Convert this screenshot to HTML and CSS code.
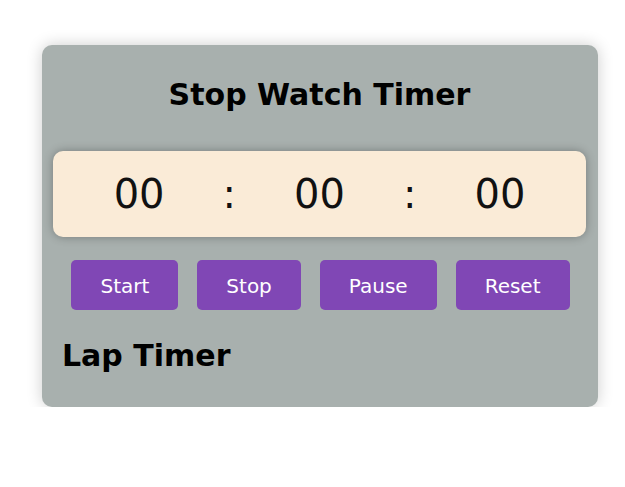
FILE: index.html
```html
<!DOCTYPE html>
<html lang="en">
<head>
<meta charset="utf-8">
<title>Stop Watch Timer</title>
<link rel="stylesheet" href="styles.css">
</head>
<body>
  <div class="card">
    <h1 class="title">Stop Watch Timer</h1>
    <div class="display">
      <span class="seg">00</span>
      <span class="sep">:</span>
      <span class="seg">00</span>
      <span class="sep">:</span>
      <span class="seg">00</span>
    </div>
    <div class="controls">
      <button class="btn">Start</button>
      <button class="btn">Stop</button>
      <button class="btn">Pause</button>
      <button class="btn">Reset</button>
    </div>
    <h2 class="lap">Lap Timer</h2>
  </div>
</body>
</html>
```
FILE: styles.css
```css
* { box-sizing: border-box; }
body {
  margin: 0;
  background: #ffffff;
  font-family: "DejaVu Sans", Verdana, sans-serif;
}
.card {
  margin: 45px 0 0 42px;
  width: 556px;
  background: #a8b0ae;
  border-radius: 10px;
  box-shadow: 0 0 16px rgba(0, 0, 0, 0.2);
  padding: 32px 12px 34px 11px;
}
.title {
  margin: 0;
  font-size: 30px;
  line-height: 35px;
  font-weight: bold;
  text-align: center;
  color: #000;
}
.display {
  margin-top: 39px;
  background: #faebd7;
  border-radius: 10px;
  box-shadow: 0 0 10px rgba(0, 0, 0, 0.3);
  padding: 20px 0;
  display: flex;
  justify-content: center;
  gap: 58px;
  font-size: 40px;
  line-height: 46px;
  color: #111;
}
.controls {
  margin-top: 23px;
  padding-left: 2px;
  display: flex;
  justify-content: center;
  gap: 19px;
}
.btn {
  font-family: "DejaVu Sans", Verdana, sans-serif;
  font-size: 20px;
  line-height: 24px;
  padding: 14px 29px 12px;
  border: none;
  border-radius: 5px;
  background: #8047b5;
  color: #fff;
}
.lap {
  margin: 28px 0 0 9px;
  font-size: 30px;
  line-height: 35px;
  font-weight: bold;
  color: #000;
}
```
